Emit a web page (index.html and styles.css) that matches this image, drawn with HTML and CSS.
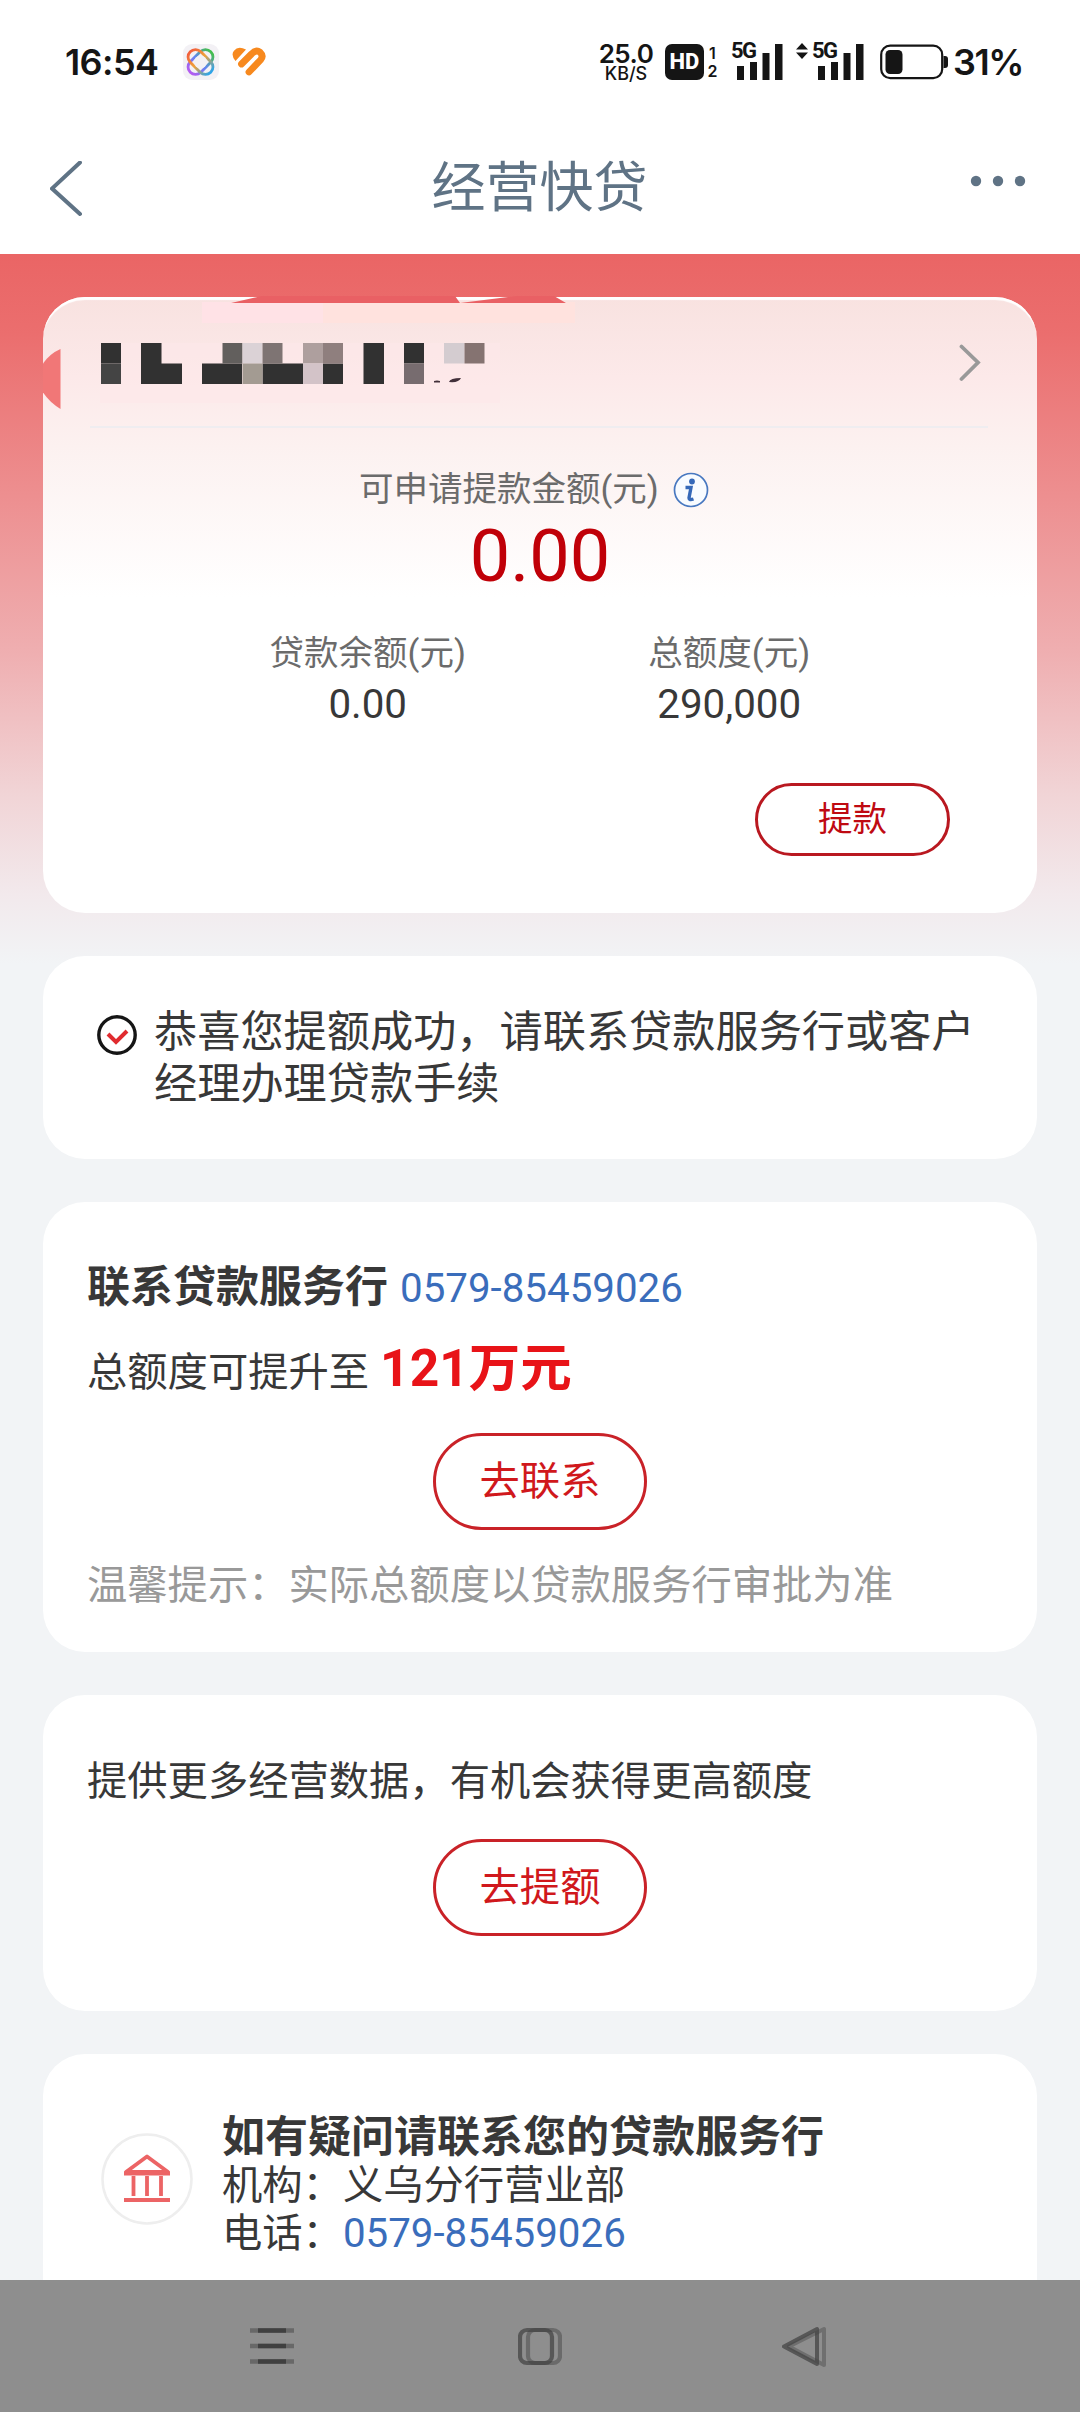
FILE: index.html
```html
<!DOCTYPE html>
<html lang="zh-CN">
<head>
<meta charset="utf-8">
<title>经营快贷</title>
<link rel="stylesheet" href="styles.css">
</head>
<body>
<div class="screen">
  <header class="status">
    <span class="clock">16:54</span>
    <svg class="app-icon" width="36" height="36" viewBox="0 0 36 36" fill="none" stroke-width="2.800">
      <defs>
        <linearGradient id="warm" x1="0" y1="0" x2="1" y2="0"><stop offset="0" stop-color="#f2603c"/><stop offset=".45" stop-color="#f0a23a"/><stop offset="1" stop-color="#2fa4e8"/></linearGradient>
        <linearGradient id="cool" x1="0" y1="0" x2="1" y2="0"><stop offset="0" stop-color="#b45cf0"/><stop offset=".5" stop-color="#5f86f0"/><stop offset="1" stop-color="#45be4e"/></linearGradient>
      </defs>
      <rect width="36" height="36" rx="9" fill="#f3f1f5"/>
      <rect x="3" y="10.500" width="29" height="15" rx="7.500" stroke="url(#cool)" transform="rotate(-45 17.500 18)"/>
      <rect x="3" y="10.500" width="29" height="15" rx="7.500" stroke="url(#warm)" transform="rotate(45 17.500 18)"/>
      <circle cx="17.500" cy="18" r="6.500" fill="#f3f1f5"/>
    </svg>
    <svg class="heart" width="34" height="30" viewBox="0 0 34 30">
      <path d="M3.500 14Q-1.500 8 2 3.700Q6-1.500 14 2.500Z" fill="#f7891e"/>
      <path d="M9.500 17L19.500 7Q24 2 28 5.200Q32 9 28.500 13L17 25" fill="none" stroke="#f7891e" stroke-width="6.800" stroke-linecap="round" stroke-linejoin="round"/>
    </svg>
    <div class="speed"><b>25.0</b><span>KB/S</span></div>
    <span class="hd">HD</span>
    <div class="sims"><span>1</span><span>2</span></div>
    <div class="signal">
      <span class="net">5G</span>
      <svg width="46" height="36" viewBox="0 0 46 36" fill="#151515"><path d="M0 22h7v14H0zM13 18h7v18h-7zM25.500 9h7v27h-7zM38 0h7.500v36H38z"/></svg>
    </div>
    <svg class="updown" width="12" height="16" viewBox="0 0 12 16" fill="#151515"><path d="M6 0L12 6.500H0zM6 16L0 9.500H12z"/></svg>
    <div class="signal second">
      <span class="net">5G</span>
      <svg width="46" height="36" viewBox="0 0 46 36" fill="#151515"><path d="M0 22h7v14H0zM13 18h7v18h-7zM25.500 9h7v27h-7zM38 0h7.500v36H38z"/></svg>
    </div>
    <svg class="battery" width="68" height="36" viewBox="0 0 68 36"><rect x="1.200" y="1.700" width="61" height="32.500" rx="9" fill="none" stroke="#151515" stroke-width="2.200"/><rect x="5.500" y="6" width="17" height="24" rx="4.500" fill="#151515"/><path d="M63.500 12h1.500q3 0 3 3v6q0 3-3 3h-1.500z" fill="#151515"/></svg>
    <span class="percent">31%</span>
  </header>

  <nav class="titlebar">
    <svg width="34" height="56" viewBox="0 0 34 56" fill="none" stroke="#5f7385" stroke-width="4" stroke-linecap="round"><path d="M30 1.500L2 27.500L30 53"/></svg>
    <h1>经营快贷</h1>
    <svg class="dots" width="56" height="12" viewBox="0 0 56 12" fill="#5f7385"><circle cx="6" cy="6" r="5.200"/><circle cx="28" cy="6" r="5.200"/><circle cx="50" cy="6" r="5.200"/></svg>
  </nav>

  <main class="content">
    <section class="card summary">
      <div class="account">
        <svg class="mosaic" width="594" height="120" viewBox="43 293 594 120">
          <path d="M202 302h121v21H202z" fill="#ffe2e6"/><path d="M323 302h252v21H323z" fill="#ffe2de"/>
          <path d="M100 343h400v60H100z" fill="#fee8e9" opacity=".6"/>
          <path d="M231 303L262 296H455L460 303L517 296H554L566 303z" fill="#e96064"/>
          <path d="M42 365Q49 354 60.500 349V409Q49 402 42 391z" fill="#f17777"/>
          <g fill="#313131">
            <path d="M101 343h20v20.500h-20zM141 343h20.500v20.500H182V384h-41zM202 363.500h40V384h-40zM262.500 363.500H303V384h-40.500zM323 363.500h20V384h-20zM363.500 343H384v41h-20.500zM404 343h20v20.500h-20z"/>
          </g>
          <path d="M101 363.500h20V384h-20z" fill="#444"/>
          <path d="M222.500 343h20v20.500h-20z" fill="#625f5d"/>
          <path d="M242.500 343h20v20.500h-20z" fill="#dbd2d6"/>
          <path d="M242.500 363.500h20V384h-20z" fill="#a39b92"/>
          <path d="M262.500 343h20v20.500h-20z" fill="#7e7473"/>
          <path d="M303 343h20v20.500h-20z" fill="#ae9f9e"/>
          <path d="M303 363.500h20V384h-20z" fill="#d3c3c8"/>
          <path d="M323 343h20v20.500h-20z" fill="#8f7f7e"/>
          <path d="M404 363.500h20V384h-20z" fill="#776c6f"/>
          <path d="M444 343h20.500v20.500H444z" fill="#d4ccd0"/>
          <path d="M464.500 343h20v20.500h-20z" fill="#857371"/>
          <path d="M434 381q3-1 6 0v1.500h-6zM449 382q1-4 12-4q-2 5-12 4z" fill="#42303a"/>
        </svg>
        <svg class="go" width="22" height="38" viewBox="0 0 22 38" fill="none" stroke="#999" stroke-width="3.800" stroke-linecap="round"><path d="M2.500 2.500L19 18.500L2.500 35"/></svg>
      </div>
      <div class="available">
        <span>可申请提款金额(元)</span>
        <svg width="36" height="36" viewBox="0 0 36 36"><circle cx="18" cy="18" r="16.500" fill="#f8fbff" stroke="#4878c0" stroke-width="1.700"/><circle cx="19" cy="9.500" r="2.900" fill="#3568b8"/><path d="M12.500 15.500H18L16 26Q16 28.500 20.500 27" fill="none" stroke="#3568b8" stroke-width="3.400"/></svg>
      </div>
      <div class="amount">0.00</div>
      <div class="figures">
        <div class="figure"><span>贷款余额(元)</span><b>0.00</b></div>
        <div class="figure"><span>总额度(元)</span><b>290,000</b></div>
      </div>
      <button class="pill withdraw">提款</button>
    </section>

    <section class="card notice">
      <svg width="40" height="40" viewBox="0 0 40 40" fill="none"><circle cx="20" cy="20" r="18.200" stroke="#151515" stroke-width="3.400"/><path d="M11 19L19 27L30 16" stroke="#e02b2f" stroke-width="4"/></svg>
      <p>恭喜您提额成功，请联系贷款服务行或客户经理办理贷款手续</p>
    </section>

    <section class="card contact">
      <div class="line head"><strong>联系贷款服务行</strong><a class="phone">0579-85459026</a></div>
      <div class="line raise"><span>总额度可提升至</span><strong>121万元</strong></div>
      <button class="pill large">去联系</button>
      <p class="hint">温馨提示：实际总额度以贷款服务行审批为准</p>
    </section>

    <section class="card more">
      <p>提供更多经营数据，有机会获得更高额度</p>
      <button class="pill large">去提额</button>
    </section>

    <section class="card branch">
      <svg width="92" height="92" viewBox="0 0 92 92" fill="none"><circle cx="46" cy="46" r="44.500" stroke="#eee" stroke-width="2.500"/><g stroke="#ec6465" stroke-width="3.800"><path d="M25 39L46 23.500L67 39z" stroke-linejoin="round"/><path d="M23 40.500H69M23 67H69M32.500 43V63M46 43V63M60 43V63"/></g></svg>
      <div class="info">
        <strong>如有疑问请联系您的贷款服务行</strong>
        <span>机构：义乌分行营业部</span>
        <span>电话：<a class="phone">0579-85459026</a></span>
      </div>
    </section>
  </main>

  <footer class="sysnav">
    <svg width="44" height="44" viewBox="0 0 44 44"><path d="M0 6.500H44M0 22H44M0 37.500H44" stroke="#686868" stroke-width="4.500"/><path d="M8 6.500H36M8 22H36M8 37.500H36" stroke="#404040" stroke-width="4.500"/></svg>
    <svg width="44" height="44" viewBox="0 0 44 44" fill="none" stroke-width="4.200"><rect x="10" y="6" width="32" height="33" rx="7" stroke="#6a6a6a"/><rect x="2" y="6" width="32" height="33" rx="7" stroke="#444" stroke-opacity=".75"/></svg>
    <svg width="44" height="44" viewBox="0 0 44 44" fill="none" stroke-width="4" stroke-linejoin="round"><path d="M42 5V41L7 22.500z" stroke="#6f6f6f"/><path d="M35 5V40L2 22.500z" stroke="#444" stroke-opacity=".75"/></svg>
  </footer>
</div>
</body>
</html>
```
FILE: styles.css
```css
* { box-sizing: border-box; }

body {
  margin: 0;
  background: #f2f4f6;
  color: #383838;
  font-family: Roboto, "Noto Sans CJK SC", sans-serif;
}

h1, p { margin: 0; font-weight: 400; }

svg { display: block; flex: none; }

.screen {
  width: 1080px;
  height: 2412px;
  overflow: hidden;
  display: flex;
  flex-direction: column;
}

/* Status bar */
.status {
  flex: none;
  height: 124px;
  padding: 0 50px 0 65px;
  display: flex;
  align-items: center;
  background: #fff;
  color: #151515;
  font-family: Inter, sans-serif;
}

.clock {
  flex: none;
  width: 118px;
  font-size: 36px;
  font-weight: 600;
  letter-spacing: -0.6px;
}

.heart { margin-left: 13px; }

.speed {
  flex: none;
  width: 60px;
  margin-left: 330px;
  display: flex;
  flex-direction: column;
  align-items: center;
}

.speed b {
  font-size: 26px;
  line-height: 22px;
  font-weight: 600;
  letter-spacing: -0.5px;
}

.speed span {
  font-size: 18px;
  line-height: 17px;
  font-weight: 500;
}

.hd {
  flex: none;
  width: 39px;
  height: 36px;
  margin-left: 9px;
  border-radius: 7px;
  background: #151515;
  color: #fff;
  font: 800 22px/36px Roboto, sans-serif;
  text-align: center;
}

.sims {
  flex: none;
  width: 13px;
  margin-left: 2px;
  display: flex;
  flex-direction: column;
  align-items: center;
  font-size: 16px;
  line-height: 18px;
  font-weight: 600;
}

.signal {
  position: relative;
  margin-left: 18px;
}

.net {
  position: absolute;
  left: -6px;
  top: -5px;
  font: 700 22px/24px Roboto, sans-serif;
  letter-spacing: -1.5px;
}

.updown { margin: -22px 0 0 13px; }

.signal.second { margin-left: 10px; }

.battery { margin-left: 16px; }

.percent {
  margin-left: 5px;
  font-size: 36px;
  font-weight: 600;
  letter-spacing: -1.5px;
}

/* Title bar */
.titlebar {
  flex: none;
  height: 130px;
  padding: 0 54px 0 50px;
  display: flex;
  align-items: center;
  justify-content: space-between;
  background: #fff;
}

.titlebar h1 {
  width: 216px;
  margin: -1px 0 0 25px;
  color: #5f7385;
  font-size: 54px;
  line-height: 80px;
  white-space: nowrap;
}

.titlebar .dots { margin-bottom: 16px; }

/* Cards */
.content {
  flex: 1;
  min-height: 0;
  overflow: hidden;
  padding: 43px 43px 0;
  display: flex;
  flex-direction: column;
  gap: 43px;
  background: linear-gradient(#ea6565 0, #eb6e6e 80px, #efafb1 400px, #f1d4d6 540px, #f2e9ec 640px, #f2f4f6 710px);
}

.card {
  flex: none;
  border-radius: 42px;
  background: #fff;
}

.summary {
  height: 616px;
  display: flex;
  flex-direction: column;
  background: linear-gradient(#f8e2e0 0, #fce9e9 80px, #fcf1f0 150px, #fff 300px);
  box-shadow: inset 0 4px 1px -1px #fff;
}

.account {
  height: 131px;
  margin: 0 49px 0 0;
  padding-right: 7px;
  display: flex;
  align-items: center;
  justify-content: space-between;
  background: linear-gradient(#efedf0, #efedf0) 47px 100% / 898px 2px no-repeat;
}

.mosaic { margin-top: -20px; }

.go { margin-top: 1px; }

.available {
  height: 60px;
  margin-top: 29px;
  padding-left: 316px;
  display: flex;
  align-items: center;
  gap: 14px;
  color: #6b6b6b;
  font-size: 34.500px;
}

.available span { margin-top: -3px; }

.available svg { margin-top: 5px; }

.amount {
  height: 76px;
  margin-top: 2px;
  color: #c00008;
  font-size: 72px;
  line-height: 76px;
  text-align: center;
}

.figures {
  height: 102px;
  margin: 32px 127px 0 144px;
  display: grid;
  grid-template-columns: 1fr 1fr;
}

.figure {
  display: flex;
  flex-direction: column;
  align-items: center;
}

.figure span {
  color: #6b6b6b;
  font-size: 34.500px;
  line-height: 52px;
}

.figure b {
  font-size: 40.300px;
  line-height: 52px;
  font-weight: 400;
}

.pill {
  display: block;
  padding: 0;
  border: 3px solid #c92228;
  background: none;
  color: #d0181c;
  font-family: inherit;
  text-align: center;
}

.withdraw {
  width: 195px;
  height: 73px;
  margin: 54px 0 0 712px;
  border-color: #b91820;
  border-radius: 37px;
  color: #bf0a12;
  font-size: 34.500px;
  line-height: 63px;
}

.notice {
  height: 203px;
  padding: 51px 0 0 54px;
  display: flex;
  gap: 17px;
}

.notice svg { margin-top: 8px; }

.notice p {
  width: 830px;
  font-size: 43.200px;
  line-height: 51.500px;
}

.contact {
  height: 450px;
  padding: 50px 44px 0;
}

.line {
  display: flex;
  align-items: baseline;
  white-space: nowrap;
  font-size: 40.300px;
}

.head {
  height: 70px;
  line-height: 70px;
}

.head strong { font-size: 43px; }

.phone { color: #3a6dbb; }

.head .phone { margin-left: 12px; }

.raise {
  height: 84px;
  padding-top: 5px;
  line-height: 84px;
}

.raise strong {
  margin-left: 11px;
  color: #e81318;
  font-size: 51.500px;
}

.large {
  width: 214px;
  height: 97px;
  margin: 27px auto 0;
  border-radius: 49px;
  font-size: 40.300px;
  line-height: 84px;
}

.hint {
  margin-top: 26px;
  color: #999;
  font-size: 40.300px;
  line-height: 60px;
  white-space: nowrap;
}

.more {
  height: 316px;
  padding: 57px 44px 0;
}

.more p {
  font-size: 40.300px;
  line-height: 60px;
}

.more .large { margin-top: 27px; }

.branch {
  height: 300px;
  padding: 57px 58px 0;
  display: flex;
}

.branch > svg { margin-top: 22px; }

.info {
  margin: 1px 0 0 29px;
  display: flex;
  flex-direction: column;
  font-size: 40.300px;
  line-height: 47.500px;
}

.info strong {
  font-size: 43px;
  line-height: 50px;
}

/* System navigation */
.sysnav {
  flex: none;
  height: 132px;
  padding: 0 254px 0 250px;
  display: flex;
  align-items: center;
  justify-content: space-between;
  background: #8e8e8e;
}

.sysnav svg:nth-child(2) { margin-left: 4px; }
```
